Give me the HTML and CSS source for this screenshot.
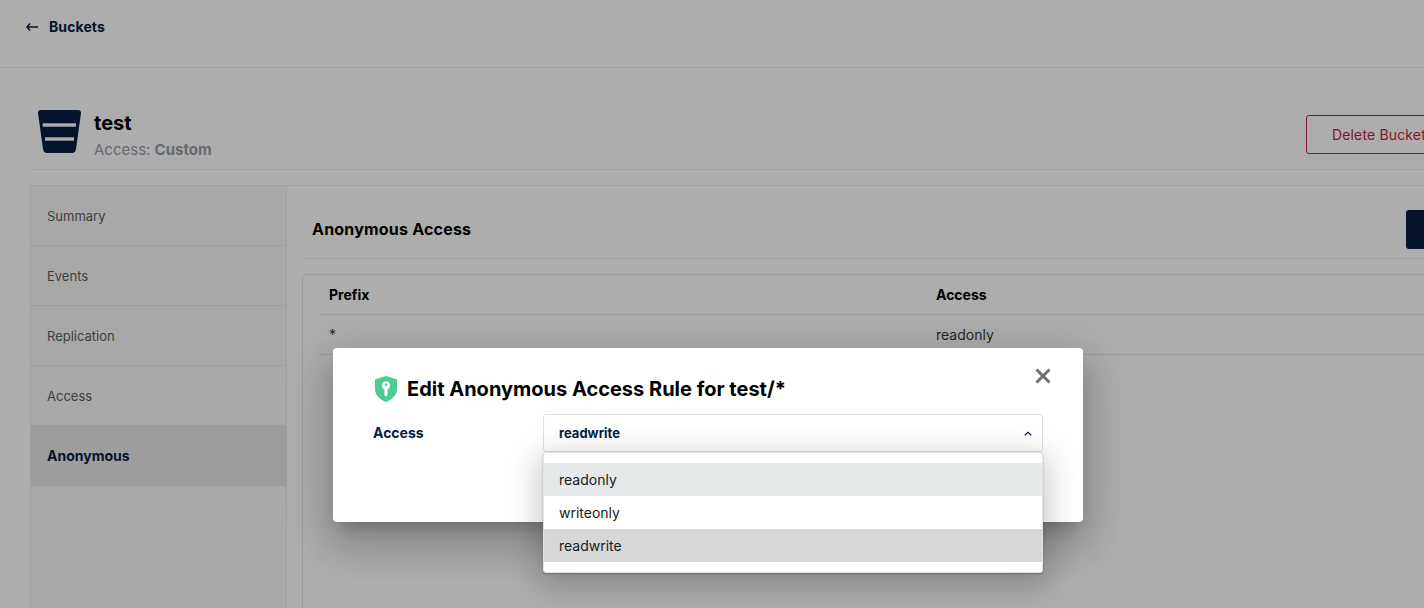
FILE: index.html
```html
<!DOCTYPE html>
<html lang="en">
<head>
    <meta charset="UTF-8">
    <title>Buckets</title>
    <link rel="stylesheet" href="styles.css">
</head>
<body>
    <div class="page">
        <div class="top-bar">
            <a class="back-link">
                <svg class="back-arrow" width="12" height="8" viewBox="0 0 12 8"><path d="M4 .6 1 4l3 3.400M1 4h11" fill="none" stroke="#081c42" stroke-width="1.500"/></svg>
                Buckets
            </a>
        </div>
        <div class="content">
            <div class="bucket-head">
                <div class="bucket-info">
                    <svg class="bucket-icon" width="43" height="43" viewBox="0 0 43 43">
                        <path d="M3 0h37q3 0 3 3l-5 36q-.6 4-4 4H9q-3.400 0-4-4L0 3q0-3 3-3z" fill="#081c42"/>
                        <rect x="4.700" y="13.300" width="33.300" height="3.400" fill="#fff"/>
                        <rect x="7" y="27.300" width="29" height="3.400" fill="#fff"/>
                    </svg>
                    <div>
                        <h1 class="bucket-name">test</h1>
                        <div class="bucket-access">Access: <b>Custom</b></div>
                    </div>
                </div>
                <button class="delete-btn">Delete Bucket</button>
            </div>
            <div class="panel">
                <div class="side-menu">
                    <div class="side-item">Summary</div>
                    <div class="side-item">Events</div>
                    <div class="side-item">Replication</div>
                    <div class="side-item">Access</div>
                    <div class="side-item active">Anonymous</div>
                </div>
                <div class="panel-body">
                    <div class="panel-title">
                        <h2>Anonymous Access</h2>
                        <button class="add-btn"></button>
                    </div>
                    <div class="rules">
                        <div class="rule-row rule-head">
                            <div class="col-prefix">Prefix</div>
                            <div>Access</div>
                        </div>
                        <div class="rule-row">
                            <div class="col-prefix">*</div>
                            <div>readonly</div>
                        </div>
                    </div>
                </div>
            </div>
        </div>

        <div class="backdrop"></div>

        <div class="modal">
            <svg class="close-icon" width="16" height="16" viewBox="0 0 16 16"><path d="M1.500 1.500l13 13M14.500 1.500l-13 13" stroke="#707070" stroke-width="3" fill="none"/></svg>
            <div class="modal-title">
                <svg class="shield" width="22" height="26" viewBox="1 0 22 26"><path d="M12 0l11 3.500v9.500c0 6-4.500 10.500-11 13C5.500 23.500 1 19 1 13V3.500z" fill="#4ccb92"/><circle cx="12" cy="9.500" r="4" fill="#fff"/><path d="M10.500 11h3v8.500l-1.500 1-1.500-1z" fill="#fff"/><circle cx="12" cy="8.700" r="1.300" fill="#4ccb92"/></svg>
                <span>Edit Anonymous Access Rule for test/*</span>
            </div>
            <div class="form-row">
                <label>Access</label>
                <div class="select">
                    <span>readwrite</span>
                    <svg width="8" height="5" viewBox="0 0 8 5"><path d="M.8 4.200 4 1.200l3.200 3" fill="none" stroke="#081c42" stroke-width="1.200"/></svg>
                </div>
            </div>
        </div>

        <ul class="dropdown">
            <li class="hover">readonly</li>
            <li>writeonly</li>
            <li class="selected">readwrite</li>
        </ul>
    </div>
</body>
</html>
```

FILE: styles.css
```css
* {
    margin: 0;
    padding: 0;
    box-sizing: border-box;
}
body {
    font-family: Inter, "Liberation Sans", sans-serif;
    background-color: #fff;
    overflow: hidden;
}
.page {
    width: 1424px;
    height: 608px;
    position: relative;
    overflow: hidden;
}
.top-bar {
    height: 68px;
    border-bottom: 1px solid #eaeaea;
    padding: 18px 26px 0;
}
.back-link {
    display: flex;
    align-items: center;
    gap: 11px;
    color: #081c42;
    font-size: 14px;
    font-weight: 700;
    line-height: 18px;
    letter-spacing: .1px;
}
.content {
    width: 1500px;
    padding: 30px 0 0 30px;
}
.bucket-head {
    display: flex;
    justify-content: space-between;
    height: 72px;
    border-bottom: 1px solid #eaeaea;
}
.bucket-info {
    display: flex;
    gap: 13px;
}
.bucket-icon {
    margin: 12px 0 0 8px;
}
.bucket-name {
    font-size: 20px;
    font-weight: 700;
    line-height: 24px;
    margin-top: 13px;
    color: #000;
}
.bucket-access {
    font-size: 15px;
    line-height: 18px;
    margin-top: 6px;
    color: #969ca5;
}
.delete-btn {
    width: 164px;
    height: 39px;
    margin: 17px 30px 0 0;
    background: #fff;
    border: 1px solid #c51c3f;
    border-radius: 3px;
    color: #c51c3f;
    font-family: inherit;
    font-size: 14px;
    letter-spacing: .15px;
    text-align: left;
    padding-left: 25px;
}
.panel {
    display: flex;
    margin-top: 15px;
    height: 500px;
    border-top: 1px solid #eaeaea;
}
.side-menu {
    width: 257px;
    border: 1px solid #eaeaea;
    border-top: 0;
    background-color: #f8f8f8;
}
.side-item {
    height: 60px;
    line-height: 60px;
    padding-left: 16px;
    font-size: 13px;
    color: #5e5e5e;
    border-bottom: 1px solid #eaeaea;
}
.side-item.active {
    background-color: #e7e7e7;
    color: #081c42;
    font-size: 14px;
    font-weight: 700;
    border-bottom: 0;
}
.panel-body {
    flex: 1;
    padding: 0 30px 0 15px;
}
.panel-title {
    display: flex;
    justify-content: space-between;
    align-items: center;
    height: 73px;
    border-bottom: 1px solid #eaeaea;
    padding-left: 10px;
}
.panel-title h2 {
    font-size: 16px;
    font-weight: 700;
    letter-spacing: .2px;
    color: #000;
    margin-top: 14px;
}
.add-btn {
    width: 64px;
    height: 39px;
    background-color: #081c42;
    border: 0;
    border-radius: 3px;
    margin-top: 14px;
}
.rules {
    margin-top: 15px;
    height: 400px;
    border: 1px solid #e5e5e5;
    border-radius: 3px;
    padding: 0 16px;
    font-size: 14px;
    color: #393939;
}
.rule-row {
    display: flex;
    height: 40px;
    line-height: 40px;
    padding-left: 10px;
    border-bottom: 1px solid #e5e5e5;
}
.rule-head {
    font-weight: 700;
    color: #000;
}
.col-prefix {
    width: 607px;
}
.backdrop {
    position: absolute;
    top: 0;
    left: 0;
    right: 0;
    bottom: 0;
    background-color: rgba(0, 0, 0, .32);
}
.modal {
    position: absolute;
    left: 333px;
    top: 348px;
    width: 750px;
    height: 174px;
    padding: 28px 40px 0;
    background-color: #fff;
    border-radius: 4px;
    box-shadow: 0 11px 15px -7px rgba(0, 0, 0, .2), 0 24px 38px 3px rgba(0, 0, 0, .14), 0 9px 46px 8px rgba(0, 0, 0, .12);
}
.close-icon {
    position: absolute;
    top: 20px;
    right: 32px;
}
.modal-title {
    display: flex;
    align-items: center;
    gap: 10px;
    font-size: 20px;
    font-weight: 700;
    color: #000;
    line-height: 26px;
}
.shield {
    margin-left: 2px;
}
.form-row {
    display: flex;
    align-items: center;
    margin-top: 12px;
}
.form-row label {
    width: 170px;
    margin-top: -2px;
    font-size: 14px;
    font-weight: 700;
    color: #081c42;
}
.select {
    width: 500px;
    height: 38px;
    display: flex;
    justify-content: space-between;
    align-items: center;
    padding: 0 10px 0 15px;
    border: 1px solid #e0e0e0;
    border-radius: 3px;
    font-size: 13px;
    font-weight: 700;
    color: #081c42;
}
.dropdown {
    position: absolute;
    left: 543px;
    top: 452px;
    width: 500px;
    height: 121px;
    padding: 10px 0;
    list-style: none;
    background-color: #fff;
    border: 1px solid #e4e4e4;
    border-radius: 3px;
    box-shadow: 0 1px 2px rgba(0, 0, 0, .25), 0 8px 30px 6px rgba(0, 0, 0, .2);
}
.dropdown li {
    height: 33px;
    line-height: 33px;
    padding-left: 15px;
    font-size: 14px;
    color: #1a1a1a;
}
.dropdown .hover {
    background-color: #e6e9e9;
}
.dropdown .selected {
    background-color: #d6d7d8;
}
```
